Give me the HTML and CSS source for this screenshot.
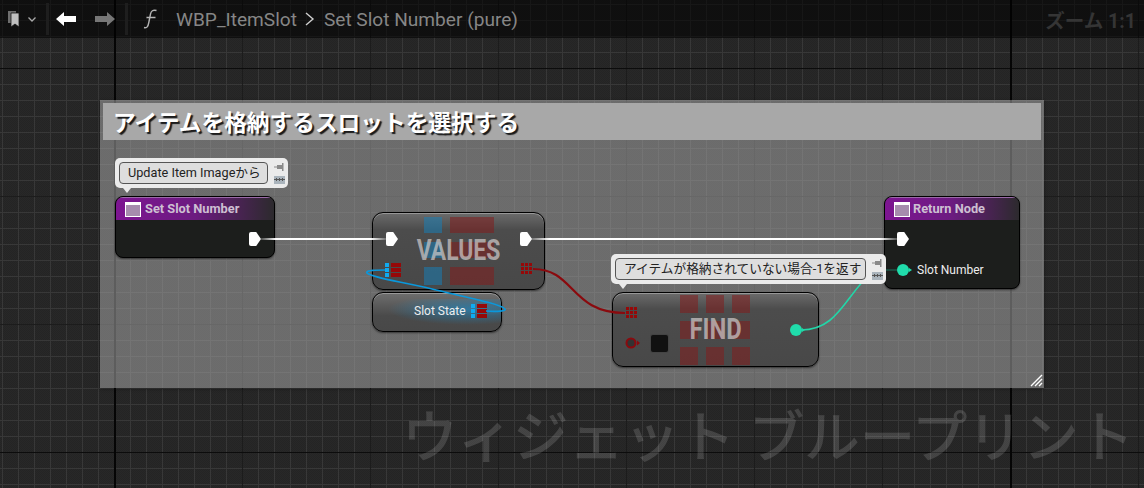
FILE: index.html
```html
<!DOCTYPE html>
<html lang="ja">
<head>
<meta charset="utf-8">
<title>WBP_ItemSlot</title>
<link rel="stylesheet" href="styles.css">
</head>
<body>
<div class="editor">
  <header class="toolbar">
    <svg class="tool-bookmark" width="38" height="20" viewBox="0 0 38 20">
      <rect x="8" y="1" width="8" height="12" fill="#6e6e6e"/>
      <path d="M11 3h8v14l-4-3-4 3z" fill="#c0c0c0" stroke="#141414" stroke-width=".8"/>
      <path d="M28.500 7.500l3.500 3.500 3.500-3.500" fill="none" stroke="#aaa" stroke-width="1.300"/>
    </svg>
    <span class="tool-sep"></span>
    <svg class="tool-arrow" width="20" height="14" viewBox="0 0 20 14"><path d="M0 7l8-7v4h12v6H8v4z" fill="#fff"/></svg>
    <svg class="tool-arrow" width="20" height="14" viewBox="0 0 20 14"><path d="M20 7l-8-7v4H0v6h12v4z" fill="#777"/></svg>
    <span class="tool-sep"></span>
    <svg class="tool-func" width="16" height="20" viewBox="0 0 16 20"><path d="M1 18.500c3 .8 4-.8 4.800-5L7.500 5c.6-3 2.500-4.500 6-3.500M3.500 8.500H12.500" fill="none" stroke="#b5b5b5" stroke-width="1.400"/></svg>
    <span class="crumb">WBP_ItemSlot</span>
    <svg class="crumb-sep" width="10" height="14" viewBox="0 0 10 14"><path d="M1 1l7 6-7 6" fill="none" stroke="#cfcfcf" stroke-width="1.400"/></svg>
    <span class="crumb">Set Slot Number (pure)</span>
    <span class="zoom-label">ズーム 1:1</span>
  </header>

  <div class="watermark">ウィジェット ブループリント</div>

  <section class="comment">
    <h2 class="comment-title">アイテムを格納するスロットを選択する</h2>
    <svg class="resize" width="14" height="14" viewBox="0 0 14 14"><path d="M13 2L2 13M13 6l-7 7M13 10l-3 3" stroke="#fff" stroke-width="1.400" fill="none"/></svg>
  </section>

  <article class="node node-func node-set">
    <div class="node-head"><span class="head-icon"></span>Set Slot Number</div>
    <span class="pin-exec pin-set-out"></span>
  </article>

  <article class="node node-func node-return">
    <div class="node-head"><span class="head-icon"></span>Return Node</div>
    <span class="pin-exec pin-ret-in"></span>
    <span class="pin-dot pin-ret-num"></span>
    <span class="pin-label label-num">Slot Number</span>
  </article>

  <article class="node node-pure node-values">
    <div class="big-grid values-grid">
      <i class="b"></i><i class="r"></i>
      <i class="b"></i><i class="r"></i>
      <i class="b"></i><i class="r"></i>
    </div>
    <div class="big-title">VALUES</div>
    <span class="pin-exec pin-val-in"></span>
    <span class="pin-exec pin-val-out"></span>
    <span class="map-pin map-val"><i></i><b></b><i></i><b></b><i></i><b></b></span>
    <span class="set-pin set-val"></span>
  </article>

  <article class="node node-pure node-state">
    <span class="state-label">Slot State</span>
    <span class="map-pin map-state"><i></i><b></b><i></i><b></b><i></i><b></b></span>
  </article>

  <article class="node node-pure node-find">
    <div class="big-grid find-grid">
      <i></i><i></i><i></i><i></i><i></i><i></i><i></i><i></i><i></i>
    </div>
    <div class="big-title">FIND</div>
    <span class="set-pin set-find"></span>
    <svg class="ring-pin" width="16" height="12" viewBox="0 0 16 12"><circle cx="6" cy="6" r="4.500" fill="#333" stroke="#8a0a0e" stroke-width="2"/><path d="M12 3.500l3 2.500-3 2.500z" fill="#8a0a0e"/></svg>
    <span class="find-box"></span>
    <span class="pin-dot pin-find-out"></span>
  </article>

  <svg class="wires" width="1144" height="488" viewBox="0 0 1144 488">
    <defs>
      <linearGradient id="wire-a" gradientUnits="userSpaceOnUse" x1="261" y1="0" x2="386" y2="0">
        <stop offset="0" stop-color="#fff" stop-opacity=".2"/><stop offset=".12" stop-color="#fff"/><stop offset=".88" stop-color="#fff"/><stop offset="1" stop-color="#fff" stop-opacity=".2"/>
      </linearGradient>
      <linearGradient id="wire-b" gradientUnits="userSpaceOnUse" x1="531" y1="0" x2="898" y2="0">
        <stop offset="0" stop-color="#fff" stop-opacity=".2"/><stop offset=".05" stop-color="#fff"/><stop offset=".95" stop-color="#fff"/><stop offset="1" stop-color="#fff" stop-opacity=".2"/>
      </linearGradient>
    </defs>
    <rect x="261" y="238" width="125" height="2" fill="url(#wire-a)"/>
    <rect x="531" y="238" width="367" height="2" fill="url(#wire-b)"/>
    <path d="M533 269C575 269 570 313 625 313" stroke="#8a0a0e" stroke-width="2.200" fill="none"/>
    <path d="M801 330C838 330 845 296 872 272" stroke="#22d6a8" stroke-width="1.600" fill="none"/>
    <path d="M886 270H898" stroke="#22d6a8" stroke-opacity=".3" stroke-width="1.600" fill="none"/>
    <path d="M486 311C497 312 507 311 505 309C500 304 470 298 432 289C405 282 375 279 367 273C365 270 378 270 385 270" stroke="#0a98dc" stroke-width="1.600" fill="none"/>
  </svg>

  <aside class="bubble bubble-set">
    <span class="bubble-text">Update Item Imageから</span>
    <span class="bubble-tools"><svg width="11" height="8" viewBox="0 0 11 8"><path d="M0 3.500h3v1H0zM3 2h5v4H3zM8 0h1.500v8H8z" fill="#8a8a8a"/></svg><i></i></span>
  </aside>
  <aside class="bubble bubble-find">
    <span class="bubble-text">アイテムが格納されていない場合-1を返す</span>
    <span class="bubble-tools"><svg width="11" height="8" viewBox="0 0 11 8"><path d="M0 3.500h3v1H0zM3 2h5v4H3zM8 0h1.500v8H8z" fill="#8a8a8a"/></svg><i></i></span>
  </aside>
</div>
</body>
</html>
```

FILE: styles.css
```css
* { box-sizing: border-box; }
html, body { margin: 0; padding: 0; }
body { background: #262626; font-family: Roboto, "Noto Sans CJK JP", sans-serif; }

.editor {
  position: relative;
  width: 1144px;
  height: 488px;
  overflow: hidden;
  background-color: #262626;
  background-image:
    linear-gradient(90deg, #050505 2px, transparent 2px),
    linear-gradient(#0c0c0c 1px, transparent 1px),
    linear-gradient(90deg, #1c1c1c 1px, transparent 1px),
    linear-gradient(#1c1c1c 1px, transparent 1px),
    linear-gradient(90deg, #383838 1px, transparent 1px),
    linear-gradient(#383838 1px, transparent 1px),
    repeating-conic-gradient(#282828 0 25%, #242424 0 50%);
  background-size: 896px 100%, 100% 384px, 128px 100%, 100% 128px, 16px 100%, 100% 16px, 2px 2px;
  background-position: 114px 0, 0 68px, 114px 0, 0 68px, 2px 0, 0 4px, 0 0;
}

/* toolbar */
.toolbar {
  height: 38px;
  display: flex;
  align-items: center;
  background: rgba(0, 0, 0, .58);
  color: #868686;
  position: relative;
  z-index: 5;
}
.tool-bookmark { margin-top: 2px; }
.tool-sep { width: 3px; height: 32px; background: #1e1e1e; margin: 0 7px 0 8px; }
.tool-arrow { flex: none; }
.tool-arrow + .tool-arrow { margin-left: 19px; }
.tool-arrow + .tool-sep { margin-left: 10px; }
.tool-func { margin-left: 8px; margin-right: 17px; }
.crumb { font-size: 19.100px; white-space: nowrap; }
.crumb-sep { margin: 0 9px 0 8px; }
.zoom-label {
  margin-left: auto;
  margin-right: 8px;
  font-weight: 700;
  font-size: 19.500px;
  color: #353535;
  white-space: nowrap;
}

/* watermark */
.watermark {
  position: absolute;
  left: 402px;
  top: 397px;
  font-size: 55.500px;
  font-weight: 500;
  line-height: 84px;
  color: rgba(255, 255, 255, .14);
  white-space: nowrap;
}

/* comment box */
.comment {
  position: absolute;
  left: 100px;
  top: 100px;
  width: 944px;
  height: 288px;
  padding: 3px;
  background: rgba(165, 165, 165, .55);
  box-shadow: 0 1px 3px rgba(0, 0, 0, .35);
}
.comment-title {
  margin: 0;
  height: 37px;
  padding-left: 10px;
  font-family: "Noto Sans CJK JP", sans-serif;
  font-weight: 700;
  font-size: 22.700px;
  line-height: 37px;
  color: #fff;
  background: #a8a8a8;
  text-shadow: 2px 2px 1px #1a1a1a;
  white-space: nowrap;
}
.resize { position: absolute; right: 1px; bottom: 1px; }

.wires { position: absolute; left: 0; top: 0; pointer-events: none; }

/* nodes */
.node {
  position: absolute;
  border: 1px solid #000;
  box-shadow: 0 1px 2px rgba(0, 0, 0, .5);
}
.node-func {
  border-radius: 8px;
  background: #1c1e1c;
  overflow: hidden;
}
.node-head {
  height: 23px;
  padding-left: 29px;
  background: linear-gradient(90deg, #7d1591 0, #6c1b80 50%, #2c2a2d 100%);
  border-top: 1px solid #9a6aa8;
  font-weight: 700;
  font-size: 12.800px;
  line-height: 21px;
  color: #cdbfd2;
  white-space: nowrap;
  position: relative;
}
.head-icon {
  position: absolute;
  left: 9px;
  top: 4px;
  width: 16px;
  height: 15px;
  border: 1px solid #fff;
  border-top-width: 3px;
  background: #a68cad;
}
.node-set { left: 115px; top: 196px; width: 160px; height: 62px; }
.node-return { left: 884px; top: 196px; width: 136px; height: 93px; }
.node-return .node-head { padding-left: 28px; }

.node-pure {
  border-radius: 11px;
  background: linear-gradient(#6b6b6b 0, #4c4c4c 22%, #484848 100%);
  box-shadow: 0 1px 2px rgba(0, 0, 0, .5), inset 0 1px 0 rgba(255, 255, 255, .3);
}
.node-values { left: 372px; top: 212px; width: 173px; height: 78px; }
.node-state {
  left: 372px; top: 292px; width: 130px; height: 40px;
  background: linear-gradient(#6e6e6e 0, #4a4a4a 60%, #484848 100%);
}
.node-state::before {
  content: "";
  position: absolute;
  left: 14px; top: 6px; right: 0; bottom: 6px;
  background: radial-gradient(ellipse at 70% 40%, rgba(20, 150, 220, .55), transparent 70%);
}
.node-find { left: 612px; top: 292px; width: 207px; height: 75px; }

.big-grid { position: absolute; display: grid; }
.big-title {
  position: absolute;
  left: 0; right: 0;
  text-align: center;
  font-weight: 700;
  font-size: 29px;
  line-height: 32px;
  color: rgba(205, 200, 200, .72);
  transform: scaleX(.82);
}
.node-values .big-title { top: 21px; transform: scaleX(.79); }
.node-find .big-title { top: 20px; }

.values-grid {
  left: 51px; top: 4px;
  grid-template-columns: 18px 44px;
  grid-template-rows: 16px 16px 18px;
  column-gap: 8px;
  row-gap: 9px;
}
.values-grid .b { background: rgba(20, 130, 190, .5); }
.values-grid .r { background: rgba(130, 30, 30, .55); }
.find-grid {
  left: 67px; top: 2px;
  grid-template-columns: repeat(3, 18px);
  grid-template-rows: repeat(3, 18px);
  column-gap: 8px;
  row-gap: 8px;
}
.find-grid i { background: rgba(130, 30, 30, .55); }

/* pins */
.pin-exec {
  position: absolute;
  width: 12px;
  height: 14px;
  background: #fff;
  clip-path: polygon(0 0, 60% 0, 100% 50%, 60% 100%, 0 100%);
  border-radius: 2px;
}
.pin-set-out { left: 133px; top: 35px; }
.pin-ret-in { left: 12px; top: 35px; }
.pin-val-in { left: 13px; top: 19px; }
.pin-val-out { left: 147px; top: 19px; }
.pin-dot {
  position: absolute;
  width: 12px;
  height: 12px;
  border-radius: 50%;
  background: #20dcab;
}
.pin-dot::after {
  content: "";
  position: absolute;
  left: 12px; top: 3.500px;
  border-left: 3px solid #20dcab;
  border-top: 2.500px solid transparent;
  border-bottom: 2.500px solid transparent;
}
.pin-ret-num { left: 12px; top: 67px; }
.pin-find-out { left: 177px; top: 31px; }
.pin-label {
  position: absolute;
  font-size: 12px;
  line-height: 14px;
  color: #eee;
  white-space: nowrap;
}
.label-num { left: 32px; top: 66px; }

.map-pin {
  position: absolute;
  display: grid;
  grid-template-columns: 4px 10px;
  grid-template-rows: repeat(3, 4px);
  column-gap: 2px;
  row-gap: 1px;
}
.map-pin i { background: #10aaf0; }
.map-pin b { background: #960808; }
.map-val { left: 12px; top: 50px; }
.map-state { left: 98px; top: 11px; }

.set-pin {
  position: absolute;
  width: 11px;
  height: 11px;
  background-color: #960808;
  background-image:
    linear-gradient(90deg, transparent 3px, #4a4a4a 3px, #4a4a4a 4px, transparent 4px, transparent 7px, #4a4a4a 7px, #4a4a4a 8px, transparent 8px),
    linear-gradient(transparent 3px, #4a4a4a 3px, #4a4a4a 4px, transparent 4px, transparent 7px, #4a4a4a 7px, #4a4a4a 8px, transparent 8px);
}
.set-val { left: 148px; top: 50px; }
.set-find { left: 13px; top: 14px; }

.ring-pin { position: absolute; left: 12px; top: 44px; }
.find-box {
  position: absolute;
  left: 38px; top: 42px;
  width: 17px; height: 17px;
  background: #111;
  border-radius: 2px;
  box-shadow: 0 0 0 1px #444;
}

.state-label {
  position: absolute;
  left: 41px; top: 11px;
  font-size: 12px;
  line-height: 15px;
  color: #eee;
  white-space: nowrap;
}

/* bubbles */
.bubble {
  position: absolute;
  display: flex;
  align-items: center;
  gap: 6px;
  height: 30px;
  padding: 4px 3px 4px 4px;
  border-radius: 5px;
  background: #ebebeb;
  z-index: 3;
}
.bubble::after {
  content: "";
  position: absolute;
  left: 8px; top: 30px;
  border-top: 5px solid #ebebeb;
  border-left: 4px solid transparent;
  border-right: 4px solid transparent;
}
.bubble-set { left: 115px; top: 158px; width: 173px; }
.bubble-find { left: 611px; top: 254px; width: 275px; }
.bubble-text {
  flex: 1;
  height: 22px;
  padding-left: 8px;
  border: 1px solid #555;
  border-radius: 4px;
  background: #dedede;
  font-size: 12.700px;
  line-height: 20px;
  color: #222;
  white-space: nowrap;
  overflow: hidden;
}
.bubble-tools {
  flex: none;
  width: 11px;
  display: flex;
  flex-direction: column;
  gap: 5px;
}
.bubble-tools svg { display: block; }
.bubble-tools i {
  display: block;
  height: 8px;
  background: radial-gradient(circle, #555 1px, transparent 1.200px) 1px 2px / 3px 3px repeat-x, #aab4bc;
}
```
